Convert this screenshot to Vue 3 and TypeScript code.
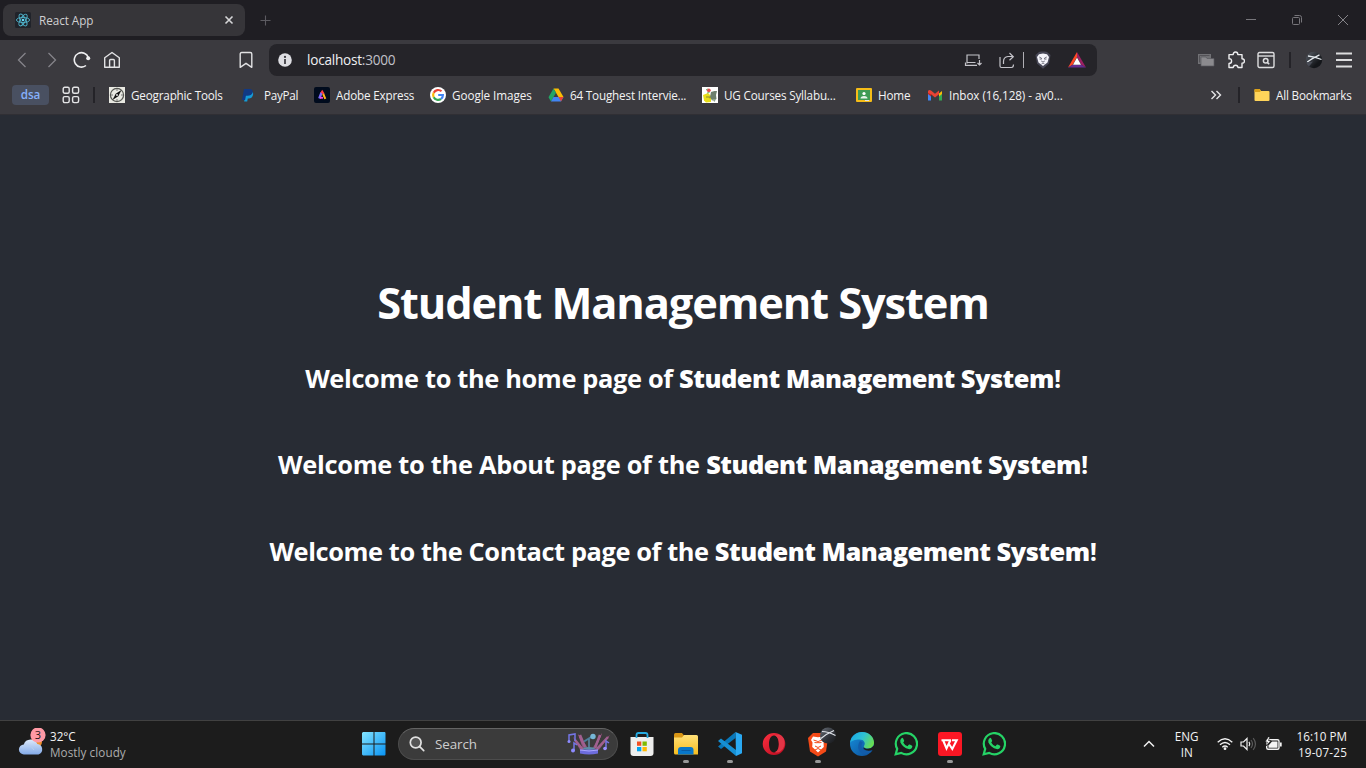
<script setup lang="ts">
interface Bookmark { id: string; label: string }
const bookmarks: Bookmark[] = [
  { id: 'geo', label: 'Geographic Tools' },
  { id: 'paypal', label: 'PayPal' },
  { id: 'adobe', label: 'Adobe Express' },
  { id: 'google', label: 'Google Images' },
  { id: 'drive', label: '64 Toughest Intervie...' },
  { id: 'ug', label: 'UG Courses Syllabu...' },
  { id: 'home', label: 'Home' },
  { id: 'gmail', label: 'Inbox (16,128) - av0...' },
]
interface PageLine { id: string; lead: string }
const lines: PageLine[] = [
  { id: 'l1', lead: 'Welcome to the home page of ' },
  { id: 'l2', lead: 'Welcome to the About page of the ' },
  { id: 'l3', lead: 'Welcome to the Contact page of the ' },
]
interface TaskApp { id: string; kind: string; running: boolean }
const apps: TaskApp[] = [
  { id: 'store', kind: 'store', running: false },
  { id: 'files', kind: 'files', running: true },
  { id: 'code', kind: 'code', running: true },
  { id: 'opera', kind: 'opera', running: false },
  { id: 'brave', kind: 'brave', running: true },
  { id: 'edge', kind: 'edge', running: false },
  { id: 'wa1', kind: 'whatsapp', running: false },
  { id: 'wps', kind: 'wps', running: true },
  { id: 'wa2', kind: 'whatsapp', running: false },
]
</script>

<template>
  <div class="screen">
    <header class="tabs">
      <div class="tab">
        <svg class="fav" width="16" height="16" viewBox="0 0 16 16">
          <rect width="16" height="16" rx="1.5" fill="#20232a" />
          <g fill="none" stroke="#4fb3cb" stroke-width=".9">
            <ellipse cx="8" cy="8" rx="6.6" ry="2.6" />
            <ellipse cx="8" cy="8" rx="6.6" ry="2.6" transform="rotate(60 8 8)" />
            <ellipse cx="8" cy="8" rx="6.6" ry="2.6" transform="rotate(120 8 8)" />
          </g>
          <circle cx="8" cy="8" r="1.3" fill="#61dafb" />
        </svg>
        <span class="tab-title">React App</span>
        <svg class="tab-close" width="10" height="10" viewBox="0 0 10 10"><path d="M1.5 1.5l7 7M8.5 1.5l-7 7" stroke="#d6d6d8" stroke-width="1.6" /></svg>
      </div>
      <svg class="new-tab" width="12" height="12" viewBox="0 0 12 12"><path d="M6.500 1.500v10M1.500 6.500h10" stroke="#5c5b61" stroke-width="1.1" /></svg>
      <div class="window-controls">
        <svg width="12" height="12" viewBox="0 0 12 12"><path d="M1 5.500h10" stroke="#77767b" /></svg>
        <svg width="12" height="12" viewBox="0 0 12 12" fill="none" stroke="#77767b"><rect x="1.500" y="3.500" width="7" height="7" rx="1" /><path d="M3.500 1.500h5a2 2 0 0 1 2 2v5" /></svg>
        <svg width="12" height="12" viewBox="0 0 12 12"><path d="M1 1l10 10M11 1L1 11" stroke="#858489" /></svg>
      </div>
    </header>

    <nav class="toolbar">
      <div class="nav-left">
        <svg width="18" height="18" viewBox="0 0 18 18" fill="none" stroke="#85848a" stroke-width="1.3"><path d="M12.500 2L5.500 9l7 7" /></svg>
        <svg width="18" height="18" viewBox="0 0 18 18" fill="none" stroke="#85848a" stroke-width="1.3"><path d="M5.500 2l7 7-7 7" /></svg>
        <svg width="18" height="18" viewBox="0 0 18 18" fill="none" stroke="#eeeef0" stroke-width="1.600"><path d="M13 14.500A7.200 7.200 0 1 1 15.300 6.500" /><circle cx="15.200" cy="7.300" r="2" fill="#eeeef0" stroke="none" /></svg>
        <svg width="18" height="18" viewBox="0 0 18 18" fill="none" stroke="#e2e2e4" stroke-width="1.400" stroke-linejoin="round"><path d="M1.700 6.800L9 1.500l7.300 5.300v9.500H1.700z" /><path d="M6.600 16V9.500q0-1 1-1h2.800q1 0 1 1V16" /></svg>
      </div>
      <svg class="save" width="18" height="18" viewBox="0 0 18 18" fill="none" stroke="#e2e2e4" stroke-width="1.400" stroke-linejoin="round"><path d="M3.200 3q0-1.500 1.500-1.500h8.600q1.500 0 1.500 1.500v13.300L9 12.300l-5.800 4z" /></svg>
      <div class="address">
        <svg class="info" width="14" height="14" viewBox="0 0 14 14"><circle cx="7" cy="7" r="6.800" fill="#dedee3" /><path d="M7 6v5" stroke="#37363b" stroke-width="1.700" /><circle cx="7" cy="3.900" r="1.100" fill="#37363b" /></svg>
        <span class="url">localhost<i>:3000</i></span>
        <svg class="install" width="18" height="16" viewBox="0 0 18 16" fill="none" stroke="#c4c3c9" stroke-width="1.200"><path d="M15 7V3H3v8.500" /><path d="M1.500 10.500v2.800h11.500M3 10.500h8.500M15.500 8v5M13.500 11l2 2 2-2" /></svg>
        <svg class="share" width="18" height="18" viewBox="0 0 18 18" fill="none" stroke="#c4c3c9" stroke-width="1.200"><path d="M2 6v9q0 1.500 1.500 1.500h10Q15.500 16.500 15.500 13.500" /><path d="M5.500 13V10.500Q5.500 6 10 5.500h4.500M11.500 2l3.800 3.700-3.800 3.500" /></svg>
        <span class="addr-rule"></span>
        <svg class="shield" width="16" height="18" viewBox="0 0 16 18"><path d="M4 1l2-.5h4L12 1l3.500 3-.5 3-1 5.500L8 17.800 2 12.500l-1-5.500L.5 4z" fill="#474756" /><path d="M4 3.200L8 2.500l4 .7 2 2.800-1.500 5.500L8 15 3.500 11.500 2 6z" fill="#f4f4fa" /><path d="M4.200 6l2.200 1v1.200L4.500 8M11.800 6L9.600 7v1.200l1.900-.2M6.200 10l1.800 1 1.800-1M6.500 13l1.500-1 1.500 1" fill="none" stroke="#474756" stroke-width=".7" /></svg>
        <svg class="bat" width="18" height="16" viewBox="0 0 18 16"><path d="M9 0L0 15.500l4.700-2.800L9 5z" fill="#ff4724" /><path d="M9 0l9 15.500-4.700-2.800L9 5z" fill="#9e1f63" /><path d="M0 15.500h18l-4.700-2.800H4.700z" fill="#662d91" /><path d="M9 5.500l4 7.200H5z" fill="#fff" /></svg>
      </div>
      <div class="nav-right">
        <svg width="18" height="18" viewBox="0 0 18 18"><path d="M1 3h13v10H1z" fill="#717175" /><path d="M2.500 11.500V4.500h10" stroke="#545358" fill="none" /><path d="M4 6h5l1 1.500h7V15H4z" fill="#8b8a8e" stroke="#59595e" stroke-width=".7" /></svg>
        <svg width="18" height="18" viewBox="0 0 18 18" fill="none" stroke="#eeeef0" stroke-width="1.400" stroke-linejoin="round"><path d="M2 3.600h4.200Q6.200 1 8.500 1T10.800 3.600h4.200v4.200Q17.500 7.800 17.500 10t-2.500 2.200v4.300H11Q10.800 14.200 8.600 14.200T6.200 16.500H2v-4Q4.600 12.500 4.600 10T2 7.800z" /></svg>
        <svg width="18" height="18" viewBox="0 0 18 18" fill="none" stroke="#dddddf" stroke-width="1.400"><rect x="1" y="1.500" width="16" height="15" rx="1.500" /><path d="M1 5h16" /><circle cx="8.700" cy="9.800" r="2.300" stroke-width="1.500" /><path d="M10.500 11.600l1.700 1.700" stroke-width="1.600" /></svg>
        <span class="dark-rule"></span>
        <svg width="18" height="18" viewBox="0 0 18 18"><defs><linearGradient id="ava" x2="1" y2="1"><stop offset="0" stop-color="#5a6069" /><stop offset=".7" stop-color="#14161a" /></linearGradient></defs><circle cx="9" cy="9" r="8.200" fill="url(#ava)" /><path d="M2.200 11Q8 6.800 14.500 3.800M3 5Q9 5.500 16.500 8.500" fill="none" stroke="#e4e9ee" stroke-width="1.300" /><path d="M1.200 11.500q.8 2.500 2.800 4l4-5z" fill="#4a4d57" /></svg>
        <svg width="18" height="18" viewBox="0 0 18 18"><path d="M1 2.500h16M1 9h16M1 15.500h16" stroke="#dcdcde" stroke-width="1.800" /></svg>
      </div>
    </nav>

    <div class="bookmarks">
      <span class="chip">dsa</span>
      <svg class="apps-grid" width="18" height="18" viewBox="0 0 18 18" fill="none" stroke="#e4e4e6" stroke-width="1.400"><rect x="1.200" y="1.200" width="6" height="6" rx="1.500" /><rect x="10.600" y="1.200" width="6" height="6" rx="1.500" /><rect x="1.200" y="10.600" width="6" height="6" rx="1.500" /><rect x="10.600" y="10.600" width="6" height="6" rx="1.500" /></svg>
      <span class="dark-rule bm-rule"></span>
      <ul class="bm-list">
        <li v-for="b in bookmarks" :key="b.id">
          <svg width="16" height="16" viewBox="0 0 16 16">
            <g v-if="b.id === 'geo'"><rect width="16" height="16" fill="#e9e9e2" /><circle cx="8" cy="8" r="6.600" fill="none" stroke="#555752" stroke-width="1.200" /><path d="M8 2v2M8 12v2M2 8h2M12 8h2" stroke="#777" /><path d="M12.500 3L9.300 9.300 3.500 13 6.700 6.700z" fill="#111" /><circle cx="8" cy="8" r="1" fill="#ddd" /></g>
            <g v-else-if="b.id === 'paypal'"><path d="M3.500 4.500h6q2.500 1 1.300 4Q10 11.500 6.800 11.500H5.800L5.200 14.500H2.200z" fill="#149bd7" /><path d="M2 2h6q3.500.5 2.500 4Q9.500 8.500 5.500 8.700H3.900L3.100 13H0z" fill="#113984" /></g>
            <g v-else-if="b.id === 'adobe'"><rect width="16" height="16" rx="2" fill="#000b1d" /><path d="M7.600 5.500L5.300 11.500" stroke="#7d6bff" stroke-width="2.400" /><path d="M7.300 6L8.200 4.500 9.700 7" stroke="#ff3b45" stroke-width="1.900" fill="none" /><path d="M9.200 6.800L11.300 11.800" stroke="#ffb11b" stroke-width="2.100" /><path d="M6 10.800h3" stroke="#ef43e1" stroke-width="1.800" /></g>
            <g v-else-if="b.id === 'google'"><circle cx="8" cy="8" r="8" fill="#fff" /><g fill="none" stroke-width="2.200"><path d="M11.500 4.300A5 5 0 0 0 3.700 5.700" stroke="#ea4335" /><path d="M3.700 5.700A5 5 0 0 0 3.700 10.300" stroke="#fbbc05" /><path d="M3.700 10.300A5 5 0 0 0 11 12" stroke="#34a853" /><path d="M11 12A5 5 0 0 0 12.900 8H8.200" stroke="#4285f4" /></g></g>
            <g v-else-if="b.id === 'drive'"><path d="M5.500 1.500h5L15.500 10h-5z" fill="#fbbc04" /><path d="M5.500 1.500L8 5.700 3 14.500.500 10.200z" fill="#22a565" /><path d="M3 14.500l2.500-4.500h10L13 14.500z" fill="#4285f4" /><path d="M10.500 10h5L13 14.500z" fill="#ea4335" /></g>
            <g v-else-if="b.id === 'ug'"><rect width="16" height="16" fill="#fff" /><path d="M1 8l5-2 3 3v6l-5 .5-2-2z" fill="#e8de18" /><circle cx="6.800" cy="3.300" r="1.900" fill="#e25050" /><path d="M4 3l1.500-1M5 6l2.500-.5" stroke="#6aae6a" /><path d="M9 5l3.500-1L15 4l-1 4 .5 4-4.500 1.500L8 10z" fill="#6d7f6d" /><path d="M10 12l2.500 3 1.500-3z" fill="#8fa38d" /><path d="M4 10h4v1.500" stroke="#8a8a30" fill="none" /></g>
            <g v-else-if="b.id === 'home'"><rect y="1" width="16" height="14" rx="1" fill="#f6bd18" /><rect x="2" y="3" width="12" height="10" fill="#3f9b55" /><circle cx="8" cy="6.500" r="1.600" fill="#fff" /><path d="M4.500 11.500Q4.500 9 8 9t3.500 2.500z" fill="#e8f5eb" /><path d="M9 13h4v1H9z" fill="#e3e3df" /></g>
            <g v-else><path d="M1 4.500v9h3V7z" fill="#4285f4" /><path d="M12 7v6.500h3v-9z" fill="#34a853" /><path d="M1 4l3 2.500v3L1 7z" fill="#c5221f" /><path d="M15 4l-3 2.500v3L15 7z" fill="#fbbc04" /><path d="M1 4.500Q1.500 2.300 4 3.500l4 3.200 4-3.200v3.800L8 10.500 4 7.300 1 6z" fill="#ea4335" /></g>
          </svg>
          <span :class="'t-' + b.id">{{ b.label }}</span>
        </li>
      </ul>
      <svg class="more" width="12" height="10" viewBox="0 0 12 10" fill="none" stroke="#e5e5e6" stroke-width="1.400"><path d="M1.500 1l4 4-4 4M6.500 1l4 4-4 4" /></svg>
      <span class="dark-rule all-rule"></span>
      <svg class="folder" width="16" height="14" viewBox="0 0 16 14"><path d="M.5 2q0-1 1-1h4L7 3h7.500q1 0 1 1v8q0 1-1 1h-13q-1 0-1-1z" fill="#ffd45a" /><path d="M.5 4V2q0-1 1-1h4L7 2.500 6 4z" fill="#dba018" /></svg>
      <span class="all">All Bookmarks</span>
    </div>

    <main class="page">
      <h1>Student Management System</h1>
      <h3 v-for="l in lines" :key="l.id" :class="l.id"><span>{{ l.lead }}</span><strong>Student Management System</strong>!</h3>
    </main>

    <footer class="taskbar">
      <div class="weather">
        <svg width="32" height="32" viewBox="0 0 32 32">
          <defs><linearGradient id="cloud" x2="0" y2="1"><stop offset="0" stop-color="#dce9fb" /><stop offset="1" stop-color="#83aae8" /></linearGradient></defs>
          <circle cx="18.500" cy="14" r="5.500" fill="#ee8d2c" />
          <path d="M6 26.500a5 5 0 0 1-.2-10 7.200 7.200 0 0 1 13.500-.5A5.400 5.400 0 0 1 20.500 26.500z" fill="url(#cloud)" />
          <path d="M4 19Q11 14 16 22" fill="none" stroke="#b7cff0" stroke-width="1" />
          <circle cx="20" cy="7" r="7" fill="#ff99a4" /><circle cx="20" cy="7" r="7.600" fill="#ff99a4" />
          <text x="20" y="11" text-anchor="middle" font-size="11" fill="#241719">3</text>
        </svg>
        <div><p>32°C</p><p class="dim">Mostly cloudy</p></div>
      </div>

      <svg class="start" width="24" height="24" viewBox="0 0 24 24">
        <defs><linearGradient id="win" x2="1" y2="1"><stop offset="0" stop-color="#83e4ff" /><stop offset="1" stop-color="#0893f4" /></linearGradient></defs>
        <path d="M1 0h10.500v11.500H0V1zM12.500 0H23l.5 1v10.500h-11zM0 12.500h11.500v11H1l-1-1zM12.500 12.500h11v10l-.5 1H12.500z" fill="url(#win)" />
      </svg>
      <div class="search">
        <svg class="lens" width="16" height="16" viewBox="0 0 16 16" fill="none" stroke="#e1e1e1" stroke-width="1.700" stroke-linecap="round"><circle cx="6.700" cy="6.500" r="5.400" fill="#555" /><path d="M10.700 10.700l4 4" /></svg>
        <span>Search</span>
        <svg class="art" width="44" height="24" viewBox="0 0 44 24">
          <defs><linearGradient id="beam" x2="0" y2="1"><stop offset="0" stop-color="#df53aa" /><stop offset="1" stop-color="#6c5267" /></linearGradient></defs>
          <path d="M6 5l12 13h-5zM11 2l10 14-5 1zM35 1l-1 3-6 14-3-1zM43 3L32 18h-5z" fill="url(#beam)" />
          <path d="M8 8l8 10M13 3l5 12M33 3l-5 13M41 5L30 17" stroke="#a0608f" stroke-width="2.500" />
          <path d="M2 10V3l6-1v7M7 19v-8l3 2M39 17V9l3 2" stroke="#7475e5" stroke-width="1.500" fill="none" /><circle cx="2" cy="9.500" r="1.500" fill="#8d8bff" /><circle cx="6" cy="18.500" r="2" fill="#8d8bff" /><circle cx="38" cy="16.500" r="1.800" fill="#9a91ff" />
          <path d="M17 9.500l8-5" stroke="#4b7f9b" stroke-width="2" /><circle cx="26" cy="4.500" r="2.700" fill="#76b7d7" /><path d="M22 7v10" stroke="#5e8dab" stroke-width="1.500" /><ellipse cx="22" cy="16.500" rx="6" ry="1.500" fill="#5d8da7" />
          <path d="M13 17.500h18v4q-9 2-18 0z" fill="#6d6cdd" /><path d="M13 18q9 2 18 0" fill="none" stroke="#aaa6ff" />
        </svg>
      </div>
      <div class="apps">
        <div v-for="a in apps" :key="a.id" class="app">
          <svg v-if="a.kind === 'store'" width="24" height="24" viewBox="0 0 24 24"><path d="M.5 5h23v16q0 3-3 3h-17q-3 0-3-3z" fill="#eeeeed" /><path d="M6.500 6V3q0-2 2-2h7q2 0 2 2v3" fill="none" stroke="#25abe2" stroke-width="1.800" /><path d="M7 9.500h4.300v4.300H7z" fill="#f25022" /><path d="M12.500 9.500h4.300v4.300h-4.300z" fill="#7fba00" /><path d="M7 15h4.300v4.300H7z" fill="#00a4ef" /><path d="M12.500 15h4.300v4.300h-4.300z" fill="#ffb900" /></svg>
          <svg v-else-if="a.kind === 'files'" width="24" height="24" viewBox="0 0 24 24"><defs><linearGradient id="fold" x2="0" y2="1"><stop offset="0" stop-color="#ffe078" /><stop offset="1" stop-color="#f7bd1f" /></linearGradient></defs><path d="M0 5V2.500Q0 1 1.500 1H8l2 2.500V6H0z" fill="#d89514" /><path d="M0 5.500h8l2-2.500h12.500Q24 3 24 4.500v18H1.500Q0 22.500 0 21z" fill="url(#fold)" /><path d="M4 22.500V18q0-3 3-3h9.500q3 0 3 3v4.500z" fill="#0877c9" /><path d="M7.500 18.500h9" stroke="#0a5ba2" /></svg>
          <svg v-else-if="a.kind === 'code'" width="24" height="24" viewBox="0 0 24 24"><path d="M17.500 0v6L3 17 0 14.500z" fill="#0877b9" /><path d="M0 9l3-2.500L18 18v6z" fill="#168fd3" /><path d="M17.500 0L24 2.800v18.400L18 24z" fill="#2aa9f2" /></svg>
          <svg v-else-if="a.kind === 'opera'" width="24" height="24" viewBox="0 0 24 24"><defs><linearGradient id="op" x2="1" y2="1"><stop offset="0" stop-color="#ff3040" /><stop offset="1" stop-color="#b4091d" /></linearGradient></defs><path fill-rule="evenodd" d="M12 1a11.300 11 0 1 0 0 22 11.300 11 0 1 0 0-22zM12 3.500c3.300 0 4.700 3.700 4.700 8.500s-1.400 8.500-4.700 8.500S7 16.800 7 12s1.700-8.500 5-8.500z" fill="url(#op)" /><path d="M13 3.500Q19 .8 22 7q2 8-3 12-3 2.500-6 1 4-1.500 4-8t-4-8.500z" fill="#e33546" /></svg>
          <svg v-else-if="a.kind === 'brave'" class="brave" width="28" height="30" viewBox="0 0 28 30"><defs><linearGradient id="badge" x2="1" y2="1"><stop offset="0" stop-color="#6a7079" /><stop offset=".6" stop-color="#2c2f35" /><stop offset="1" stop-color="#16181b" /></linearGradient></defs><path d="M5 6h11l4 5-2 13.500-8 5-8-5L0 11l2-2z" fill="#f44a17" /><path d="M5 9.500l5 .8 5-.8 2 3.500-1.500 2.500.3 4.500-2.800 2.500-3 3-3-3L4.200 20l.3-4.500L3 13z" fill="#fff" /><path d="M5.500 13l4 1.300v1.500l-3-.3M14.500 13l-4 1.300v1.500l3-.3M7 19l3 1.500 3-1.500M7 23l3-1.500 3 1.500" fill="none" stroke="#f44a17" stroke-width="1" /><circle cx="20" cy="8.500" r="8" fill="url(#badge)" /><path d="M13 11.500Q18 7 26 3.500M14 4.500q6 0 13.500 4" fill="none" stroke="#dfe3e9" stroke-width="1.200" /></svg>
          <svg v-else-if="a.kind === 'edge'" width="24" height="24" viewBox="0 0 24 24"><defs><linearGradient id="edgeTop" x1="0" y1=".2" x2="1" y2=".6"><stop offset="0" stop-color="#19a7e6" /><stop offset=".5" stop-color="#2fc2d3" /><stop offset="1" stop-color="#6ade4d" /></linearGradient><linearGradient id="edgeLow" x2="1" y2="1"><stop offset="0" stop-color="#1790dc" /><stop offset="1" stop-color="#0b4b96" /></linearGradient></defs><circle cx="12" cy="12" r="12" fill="url(#edgeLow)" /><path d="M0 11C1 4 6 0 12 0c7 0 12 5 12 10.500 0 4-3 6-6 6-3.500 0-4.700-1.500-4-2.500 2-3 0-6.500-4.500-6.500C5 7.500 1 9 0 11z" fill="url(#edgeTop)" /><path d="M10 9c-4 6-1 13 5 13 3 0 6-1.500 7.500-4-6 2.500-11-1-11-4 0-2 1.500-2.500 1-4z" fill="#125caa" /><path d="M14 14.500q-.5 2 4 2.200 3.500 0 6-3.200l1 1-2 3.500q-6 2-9.500-1z" fill="#1c1c1c" /></svg>
          <svg v-else-if="a.kind === 'whatsapp'" width="24" height="24" viewBox="0 0 24 24"><path d="M1.700 22.300l1.500-5.400A10.600 10.600 0 1 1 7.200 20.900z" fill="none" stroke="#25d366" stroke-width="2.200" /><path d="M7.500 6.200q1-1 1.700.2l1 2.300q0 .7-1 1.700 1.600 2.900 4.300 3.800l1.200-1.400q.4-.5 1.100-.2l2.300 1.200q.8.700-.5 2.400-1.200 1.100-3 .9-5.500-1.500-8.200-6.700-.7-2.700 1.100-4.200z" fill="#25d366" /></svg>
          <svg v-else width="24" height="24" viewBox="0 0 24 24"><rect width="24" height="24" rx="3" fill="#fb1724" /><path d="M3.500 8.200h9.500M5 8l3.500 8.500L12.500 8" fill="none" stroke="#fff" stroke-width="2.100" /><path d="M11 12l3.300 5L18.700 8.200H14" fill="none" stroke="#fff" stroke-width="2.100" /></svg>
          <span v-if="a.running" class="dot"></span>
        </div>
      </div>
      <div class="tray">
        <svg class="chev" width="12" height="8" viewBox="0 0 12 8"><path d="M1 6.500l5-5 5 5" fill="none" stroke="#f0f0f0" stroke-width="1.500" /></svg>
        <div class="lang"><p>ENG</p><p>IN</p></div>
        <svg class="wifi" width="16" height="14" viewBox="0 0 16 14" fill="none" stroke="#f3f3f3" stroke-width="1.300"><path d="M.7 5.300Q8-1.700 15.300 5.300M3 7.800q5-4.700 10 0M5.300 10.200q2.700-2.400 5.400 0" /><circle cx="8" cy="11.700" r="1.400" fill="#f3f3f3" stroke="none" /></svg>
        <svg class="sound" width="17" height="14" viewBox="0 0 17 14" fill="none" stroke="#f1f1f1" stroke-width="1.200"><path d="M1 5h2.500L7 1.500v11L3.500 9H1z" /><path d="M9 4.800q1.500 2.200 0 4.400" /><path d="M11 3q3 4 0 8M13.200 1.200q4.500 5.800 0 11.600" stroke="#5a5a5a" /></svg>
        <svg class="battery" width="17" height="14" viewBox="0 0 17 14"><rect x="1.700" y="2.700" width="12.300" height="9.600" rx="1.500" fill="none" stroke="#f4f4f4" stroke-width="1.400" /><path d="M3.500 10.700V8.500L7 4.500h5.500v6.200z" fill="#f4f4f4" /><path d="M15 5.500h1.700v4H15z" fill="#f4f4f4" /><path d="M3.500-.5L0 5h2.300L1.300 9 6 3.500H3.500L5-.5z" fill="#fff" stroke="#1c1c1c" stroke-width=".7" /></svg>
        <div class="clock"><p>16:10 PM</p><p class="date">19-07-25</p></div>
      </div>
    </footer>
  </div>
</template>

<style>
html, body { margin: 0; background: #282c34; overflow: hidden; }
</style>

<style scoped>
.screen { width: 1366px; height: 768px; display: flex; flex-direction: column; font-family: "Open Sans", "Noto Sans", sans-serif; font-size: 11.7px; color: #f3f3f4; white-space: nowrap; overflow: hidden; }
svg { display: block; flex: none; }
p, h1, h3, ul { margin: 0; padding: 0; }
.tabs { height: 40px; flex: none; background: #1f1e23; display: flex; align-items: center; }
.tab { width: 242px; height: 32px; margin-left: 3px; border-radius: 8px; background: #363539; display: flex; align-items: center; box-sizing: border-box; padding: 0 11px 0 12px; }
.tab-title { margin-left: 8px; margin-top: -1px; color: #d0d0d2; letter-spacing: -.04px; }
.tab-close { margin-left: auto; }
.new-tab { margin-left: 14px; }
.window-controls { margin-left: auto; display: flex; gap: 34px; padding-right: 17px; }
.toolbar { height: 40px; flex: none; background: #3b3a3f; display: flex; align-items: center; }
.nav-left { display: flex; gap: 12px; margin-left: 13px; }
.save { margin-left: 116px; }
.address { width: 828px; height: 32px; box-sizing: border-box; margin-left: 14px; border-radius: 8px; background: #252429; display: flex; align-items: center; padding: 0 11px 0 9px; }
.url { margin-left: 15px; font-size: 13.6px; letter-spacing: -.24px; color: #efeff2; margin-top: -1px; }
.url i { font-style: normal; color: #c1c1ca; }
.install { margin-left: auto; }
.share { margin-left: 16px; }
.addr-rule { width: 1px; height: 16px; margin-left: 7px; background: #b0afb4; }
.shield { margin-left: 11px; }
.bat { margin-left: 17px; }
.nav-right { margin-left: auto; display: flex; align-items: center; gap: 12px; padding-right: 13px; }
.dark-rule { width: 2px; height: 16px; background: #242328; flex: none; }
.nav-right .dark-rule { margin: 0 2px; }
.bookmarks { height: 35px; box-sizing: border-box; flex: none; background: #3b3a3f; border-bottom: 1px solid #302f34; display: flex; align-items: center; padding-bottom: 4px; }
.chip { width: 37px; height: 20px; line-height: 19px; border-radius: 4px; margin-left: 12px; text-align: center; background: #495061; color: #86b0fb; font-weight: 600; }
.apps-grid { margin-left: 13px; }
.bm-rule { margin-left: 13px; }
.bm-list { list-style: none; display: grid; grid-template-columns: 133px 72px 116px 118px 154px 154px 71px 137px; margin-left: 14px; }
.bm-list li { display: flex; align-items: center; gap: 6px; }
.bm-list span, .all { line-height: 16px; letter-spacing: -.18px; margin-top: -1px; }
.bm-list .t-paypal { letter-spacing: -.3px; }
.bm-list .t-google { letter-spacing: -.05px; }
.bm-list .t-gmail { letter-spacing: -.06px; }
.more { margin-left: 146px; }
.all-rule { margin-left: 16px; }
.folder { margin-left: 14px; }
.all { margin-left: 6px; }
.page { flex: 1; background: #282c34; color: #fff; text-align: center; padding-top: 158px; box-sizing: border-box; }
h1 { font-size: 43.4px; line-height: 60px; font-weight: 700; letter-spacing: -1.1px; margin-bottom: 27px; }
h3 { font-size: 25.4px; line-height: 36px; font-weight: 700; letter-spacing: -.35px; white-space: pre; }
.l1 { margin-bottom: 50px; }
.l2 { margin-bottom: 51px; letter-spacing: -.29px; }
.l3 { letter-spacing: -.41px; }
h3 strong { font-weight: 800; letter-spacing: -.5px; }
.taskbar { height: 48px; flex: none; box-sizing: border-box; border-top: 1px solid #414141; background: #1c1c1c; display: grid; grid-template-columns: 362px 36px 222px 396px 1fr; align-items: center; padding-bottom: 1px; }
.weather { display: flex; align-items: center; padding-left: 18px; line-height: 16px; }
.weather div { margin-top: -1px; }
.dim { color: #adadad; letter-spacing: .07px; }
.search { width: 220px; height: 32px; box-sizing: border-box; border: 1px solid #4c4c4c; border-top-color: #646464; border-radius: 16px; background: #3b3b3b; display: flex; align-items: center; padding: 0 6px 0 10px; font-size: 13.4px; color: #cecece; letter-spacing: -.1px; }
.search span { margin-left: 10px; margin-top: -1px; }
.art { margin-left: auto; }
.apps { display: flex; }
.app { width: 44px; height: 46px; flex: none; display: flex; align-items: center; justify-content: center; position: relative; }
.brave { margin: -5px -7px 0 0; }
.dot { position: absolute; left: 19px; bottom: 4px; width: 6px; height: 3px; border-radius: 2px; background: #989898; }
.tray { display: flex; align-items: center; justify-content: flex-end; padding-right: 19px; line-height: 16px; }
.lang { text-align: center; margin: 0 0 0 20px; }
.wifi { margin-left: 18px; }
.sound { margin-left: 7px; }
.battery { margin-left: 8px; }
.clock { text-align: right; margin: -1px 0 0 15px; }
.date { letter-spacing: .18px; }
</style>
